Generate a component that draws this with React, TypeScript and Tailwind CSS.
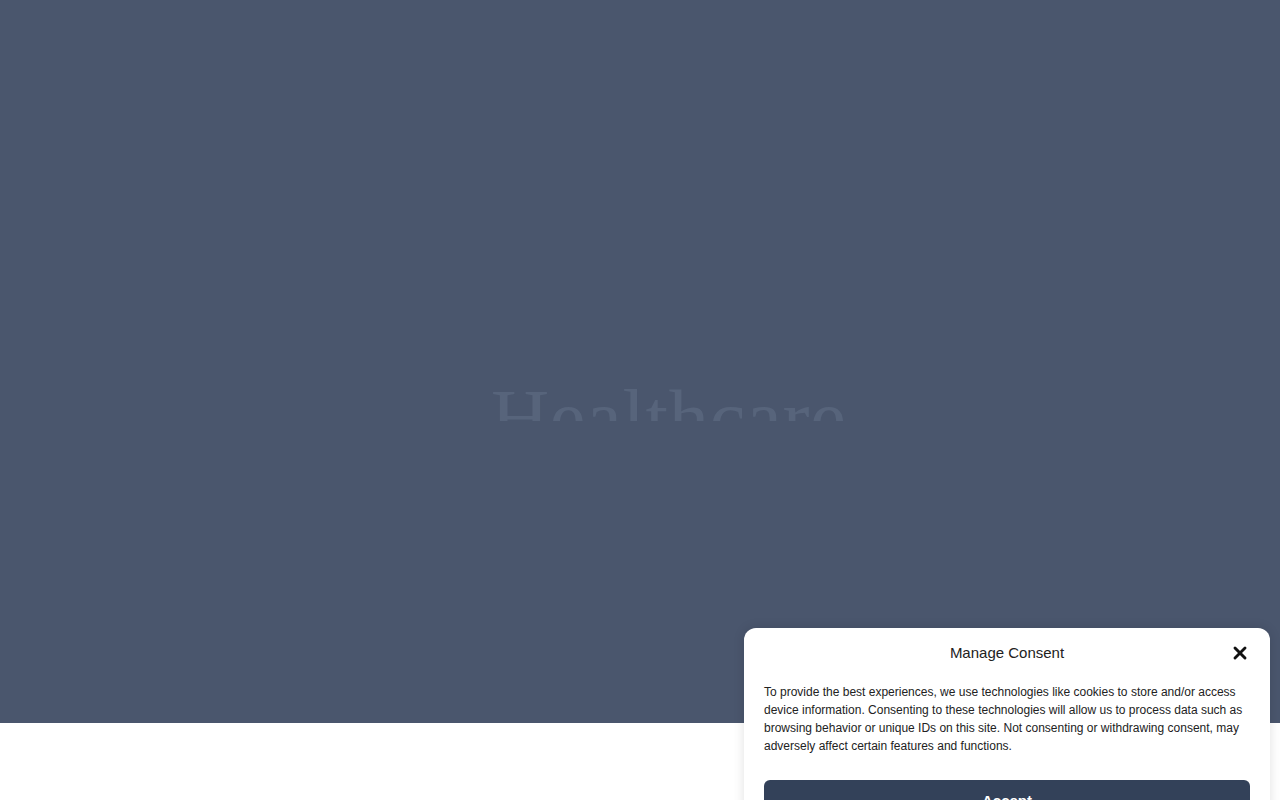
import { X } from "lucide-react";

export default function App() {
  return (
    <div className="relative w-full h-[800px] overflow-hidden bg-white font-['Liberation_Sans',Arial,sans-serif]">
      {/* Hero */}
      <section className="h-[723px] bg-[#4a566d] flex flex-col items-center">
        <div className="mt-[370px] ml-[57px] h-[51px] overflow-hidden">
          <h1 className="font-['Liberation_Serif','Times_New_Roman',serif] text-[81px] leading-[1.2] text-[#57647b] tracking-[0.5px]">
            Healthcare
          </h1>
        </div>
      </section>

      {/* Consent banner */}
      <div className="absolute left-[744px] top-[628px] w-[526px] bg-white rounded-[12px] shadow-[0_0_12px_rgba(0,0,0,0.12)] px-5 pt-[14px] pb-5">
        <div className="relative flex items-center justify-center h-[22px]">
          <span className="text-[15px] text-[#222]">Manage Consent</span>
          <button className="absolute right-0 top-[1px] text-[#111]">
            <X size={20} strokeWidth={3.5} />
          </button>
        </div>
        <p className="mt-[19px] text-[12px] leading-[18px] text-[#222]">
          To provide the best experiences, we use technologies like cookies to store and/or access device information.
          Consenting to these technologies will allow us to process data such as browsing behavior or unique IDs on this
          site. Not consenting or withdrawing consent, may adversely affect certain features and functions.
        </p>
        <button className="mt-[25px] w-full h-[42px] rounded-[6px] bg-[#334159] text-white text-[15px] font-bold">
          Accept
        </button>
      </div>
    </div>
  );
}
